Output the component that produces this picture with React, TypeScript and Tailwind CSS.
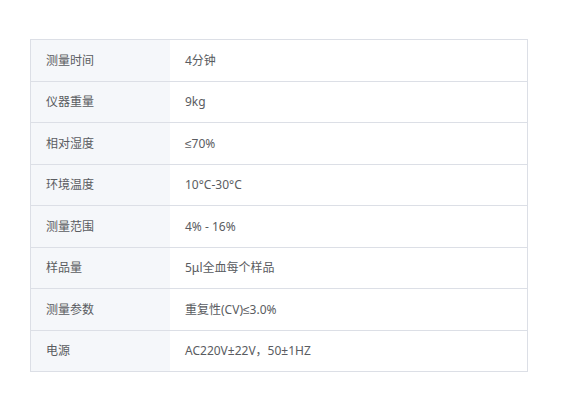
import React from "react";

const specs: [string, React.ReactNode][] = [
  ["测量时间", "4分钟"],
  ["仪器重量", "9kg"],
  ["相对湿度", <><span className="font-['Liberation_Sans']">≤</span>70%</>],
  ["环境温度", "10°C-30°C"],
  ["测量范围", "4% - 16%"],
  ["样品量", "5μl全血每个样品"],
  ["测量参数", <>重复性(CV)<span className="font-['Liberation_Sans']">≤</span>3.0%</>],
  ["电源", "AC220V±22V，50±1HZ"],
];

const App = () => {
  return (
    <div
      className="w-[566px] h-[393px] bg-white pt-[39px] pl-[30px]"
      style={{ fontFamily: '"Noto Sans", "Noto Sans CJK SC", sans-serif' }}
    >
      {/* Spec table */}
      <div className="w-[498px] border-t border-l border-r border-[#dcdfe6] text-[12px] text-[#5a5c61]">
        {specs.map(([label, value]) => (
          <div key={label} className="flex h-[41.5px] border-b border-[#dcdfe6]">
            <div className="w-[139px] bg-[#f5f7fa] flex items-center pl-[15px] pt-px">
              {label}
            </div>
            <div className="flex-1 flex items-center pl-[15px] pt-px">{value}</div>
          </div>
        ))}
      </div>
    </div>
  );
};

export default App;
